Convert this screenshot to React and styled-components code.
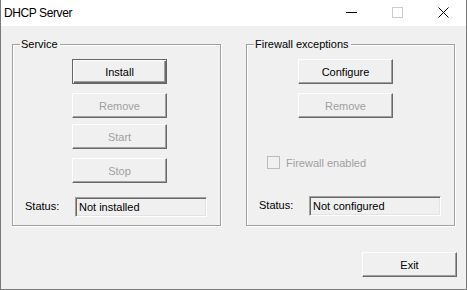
import React from 'react';
import styled, { createGlobalStyle } from 'styled-components';

const GlobalStyle = createGlobalStyle`
  html, body {
    margin: 0;
    padding: 0;
    background: #ffffff;
  }
`

const App = () => {
    return (
        <>
            <GlobalStyle />
            <Window>
                <TitleBar>
                    <Title>DHCP Server</Title>
                    <TitleButtons>
                        <TitleButton>
                            <svg width="11" height="11" viewBox="0 0 11 11">
                                <path d="M0 5.5H11" stroke="#000" strokeWidth="1" />
                            </svg>
                        </TitleButton>
                        <TitleButton>
                            <svg width="11" height="11" viewBox="0 0 11 11">
                                <rect x="0.5" y="0.5" width="10" height="10" fill="none" stroke="#cccccc" strokeWidth="1" />
                            </svg>
                        </TitleButton>
                        <TitleButton>
                            <svg width="11" height="11" viewBox="0 0 11 11">
                                <path d="M0.5 0.5L10.5 10.5M10.5 0.5L0.5 10.5" stroke="#000" strokeWidth="1" />
                            </svg>
                        </TitleButton>
                    </TitleButtons>
                </TitleBar>

                <Client>
                    <Groups>
                        <GroupBox>
                            <GroupLabel>Service</GroupLabel>
                            <Button $default $left={59}>Install</Button>
                            <Button disabled $left={59} $top={9}>Remove</Button>
                            <Button disabled $left={59} $top={6}>Start</Button>
                            <Button disabled $left={59} $top={9}>Stop</Button>
                            <StatusRow $top={14}>
                                <StatusLabel>Status:</StatusLabel>
                                <StatusBox>Not installed</StatusBox>
                            </StatusRow>
                        </GroupBox>

                        <GroupBox>
                            <GroupLabel>Firewall exceptions</GroupLabel>
                            <Button $left={51}>Configure</Button>
                            <Button disabled $left={51} $top={9}>Remove</Button>
                            <CheckRow>
                                <CheckBox />
                                <CheckLabel>Firewall enabled</CheckLabel>
                            </CheckRow>
                            <StatusRow $top={27}>
                                <StatusLabel>Status:</StatusLabel>
                                <StatusBox>Not configured</StatusBox>
                            </StatusRow>
                        </GroupBox>
                    </Groups>

                    <Footer>
                        <Button>Exit</Button>
                    </Footer>
                </Client>
            </Window>
        </>
    )
}

export default App;

const Window = styled.div`
  width: 467px;
  height: 290px;
  box-sizing: border-box;
  border: 1px solid #7a7a7a;
  border-top: none;
  display: flex;
  flex-direction: column;
  font-family: "Liberation Sans", Arial, sans-serif;
  font-size: 11px;
  color: #000;
`

const TitleBar = styled.div`
  height: 26px;
  display: flex;
  align-items: center;
  justify-content: space-between;
  background: #ffffff;
  padding-left: 3px;
`

const Title = styled.div`
  font-size: 12px;
  letter-spacing: -0.4px;
  font-family: "Liberation Sans", Arial, sans-serif;
  color: #000;
`

const TitleButtons = styled.div`
  display: flex;
  height: 100%;
`

const TitleButton = styled.div`
  width: 46px;
  height: 100%;
  display: flex;
  align-items: center;
  justify-content: center;
  padding-bottom: 1px;
  box-sizing: border-box;

  svg {
    display: block;
  }
`

const Client = styled.div`
  flex: 1;
  background: #f0f0f0;
  padding: 18px 9px 0 11px;
  display: flex;
  flex-direction: column;
`

const Groups = styled.div`
  display: flex;
  gap: 25px;
`

const GroupBox = styled.div`
  position: relative;
  width: 209px;
  height: 182px;
  box-sizing: border-box;
  border: 1px solid #a0a0a0;
  box-shadow: inset 1px 1px 0 #ffffff, 1px 1px 0 #ffffff;
  padding-top: 14px;
  display: flex;
  flex-direction: column;
  align-items: flex-start;
`

const GroupLabel = styled.span`
  position: absolute;
  top: -8px;
  left: 7px;
  padding: 0 2px 0 1px;
  background: #f0f0f0;
  line-height: 14px;
`

const Button = styled.button`
  width: 95px;
  height: 25px;
  margin: ${p => p.$top || 0}px 0 0 ${p => p.$left || 0}px;
  padding: 0;
  box-sizing: border-box;
  font-family: "Liberation Sans", Arial, sans-serif;
  font-size: 11px;
  color: #000;
  background: #f0f0f0;
  border: 1px solid;
  border-color: #ffffff #696969 #696969 #ffffff;
  box-shadow: inset -1px -1px 0 #a0a0a0;
  outline: none;

  ${p => p.$default && `
    border-color: #646464;
    box-shadow: inset 1px 1px 0 #ffffff, inset -1px -1px 0 #696969, inset -2px -2px 0 #a0a0a0;
  `}

  &:disabled {
    color: #a0a0a0;
  }
`

const CheckRow = styled.div`
  display: flex;
  align-items: center;
  gap: 6px;
  margin: 38px 0 0 20px;
  height: 13px;
`

const CheckBox = styled.div`
  width: 13px;
  height: 13px;
  box-sizing: border-box;
  border: 1px solid #bcbcbc;
  background: #f0f0f0;
`

const CheckLabel = styled.span`
  color: #a0a0a0;
  font-size: 11px;
`

const StatusRow = styled.div`
  display: grid;
  grid-template-columns: 50px 132px;
  align-items: center;
  margin: ${p => p.$top}px 0 0 12px;
`

const StatusLabel = styled.span`
  margin-top: -3px;
`

const StatusBox = styled.div`
  height: 20px;
  box-sizing: border-box;
  border: 1px solid;
  border-color: #a0a0a0 #ffffff #ffffff #a0a0a0;
  box-shadow: inset 1px 1px 0 #696969, inset -1px -1px 0 #e3e3e3;
  padding-left: 3px;
  line-height: 18px;
  font-size: 11px;
  background: #f0f0f0;
`

const Footer = styled.div`
  display: flex;
  justify-content: flex-end;
  margin-top: 26px;
`
